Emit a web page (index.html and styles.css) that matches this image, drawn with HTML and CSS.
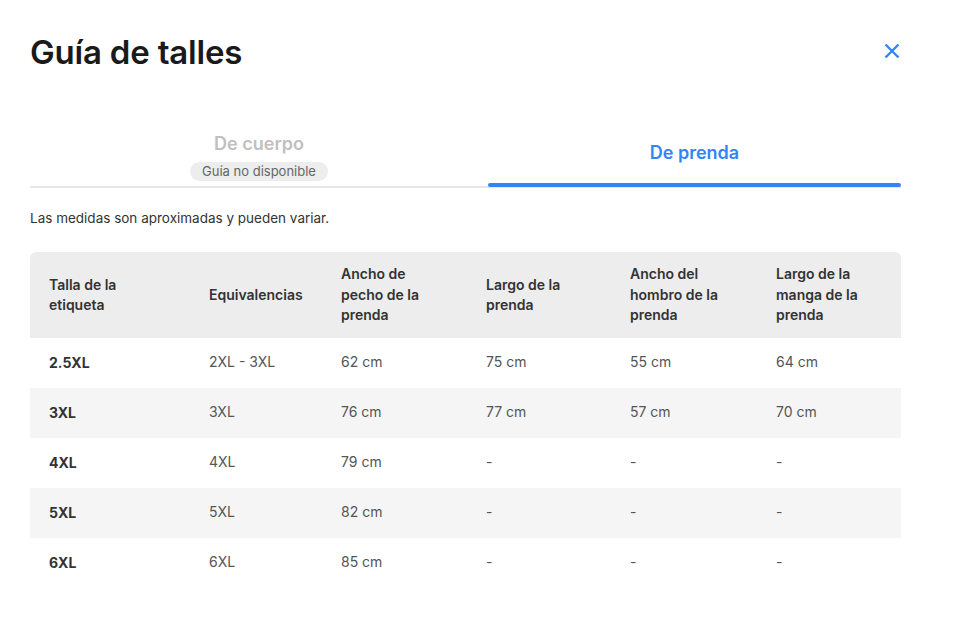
FILE: index.html
```html
<!DOCTYPE html>
<html lang="es">
<head>
<meta charset="utf-8">
<title>Guía de talles</title>
<link rel="stylesheet" href="styles.css">
</head>
<body>
<div class="modal">
  <header class="head">
    <h1 class="title">Guía de talles</h1>
    <button class="close" aria-label="Cerrar">
      <svg width="16" height="16" viewBox="0 0 16 16"><path d="M1.5 1.5 L14.5 14.5 M14.5 1.5 L1.5 14.5" stroke="#3483fa" stroke-width="2.4" stroke-linecap="butt" fill="none"/></svg>
    </button>
  </header>
  <nav class="tabs">
    <div class="tab disabled">
      <span class="tab-label">De cuerpo</span>
      <span class="badge">Guía no disponible</span>
    </div>
    <div class="tab active">
      <span class="tab-label">De prenda</span>
    </div>
  </nav>
  <p class="note">Las medidas son aproximadas y pueden variar.</p>
  <table class="sizes">
    <thead>
      <tr>
        <th class="c1">Talla de la<br>etiqueta</th>
        <th class="c2">Equivalencias</th>
        <th class="c3">Ancho de<br>pecho de la<br>prenda</th>
        <th class="c4">Largo de la<br>prenda</th>
        <th class="c5">Ancho del<br>hombro de la<br>prenda</th>
        <th class="c6">Largo de la<br>manga de la<br>prenda</th>
      </tr>
    </thead>
    <tbody>
      <tr><td class="size">2.5XL</td><td>2XL - 3XL</td><td>62 cm</td><td>75 cm</td><td>55 cm</td><td>64 cm</td></tr>
      <tr><td class="size">3XL</td><td>3XL</td><td>76 cm</td><td>77 cm</td><td>57 cm</td><td>70 cm</td></tr>
      <tr><td class="size">4XL</td><td>4XL</td><td>79 cm</td><td>-</td><td>-</td><td>-</td></tr>
      <tr><td class="size">5XL</td><td>5XL</td><td>82 cm</td><td>-</td><td>-</td><td>-</td></tr>
      <tr><td class="size">6XL</td><td>6XL</td><td>85 cm</td><td>-</td><td>-</td><td>-</td></tr>
    </tbody>
  </table>
</div>
</body>
</html>
```

FILE: styles.css
```css
* { box-sizing: border-box; }
html, body { margin: 0; padding: 0; background: #fff; }
body {
  font-family: "Inter", "Liberation Sans", sans-serif;
  color: #333;
}
.modal {
  width: 901px;
  padding: 30px 0 0 30px;
}
.head {
  display: flex;
  justify-content: space-between;
  align-items: center;
  height: 44px;
}
.title {
  margin: 0;
  font-size: 33px;
  font-weight: 600;
  color: #1a1a1a;
  letter-spacing: -0.2px;
}
.close {
  border: 0;
  background: none;
  padding: 0;
  width: 16px;
  height: 16px;
  margin-right: 1px;
  margin-top: -2px;
  display: flex;
}
.tabs {
  margin-top: 48px;
  display: flex;
  border-bottom: 2px solid #e6e6e6;
}
.tab {
  display: flex;
  flex-direction: column;
  align-items: center;
  height: 64px;
}
.tab.disabled { width: 458px; flex: none; padding-top: 10px; }
.tab.disabled .tab-label {
  color: #bfbfbf;
  font-size: 18px;
  font-weight: 600;
  line-height: 24px;
}
.badge {
  margin-top: 6px;
  background: #ededed;
  color: #666;
  font-size: 13px;
  line-height: 19px;
  padding: 0 12px;
  border-radius: 10px;
}
.tab.active {
  flex: 1;
  justify-content: center;
  padding-bottom: 2px;
  position: relative;
}
.tab.active::after {
  content: "";
  position: absolute;
  left: 0; right: 0; bottom: -1px;
  height: 4px;
  border-radius: 2px;
  background: #3483fa;
}
.tab.active .tab-label {
  color: #3483fa;
  font-size: 18px;
  font-weight: 600;
  line-height: 24px;
}
.note {
  margin: 22px 0 0;
  font-size: 13.5px;
  line-height: 16px;
  color: #333;
}
.sizes {
  margin-top: 26px;
  width: 871px;
  border-collapse: separate;
  border-spacing: 0;
  table-layout: fixed;
  font-size: 14px;
}
.sizes th {
  background: #ededed;
  text-align: left;
  font-weight: 600;
  color: #333;
  line-height: 20.5px;
  height: 86px;
  padding: 0 10px 0 19px;
  vertical-align: middle;
}
.sizes th:first-child { border-top-left-radius: 6px; }
.sizes th:last-child { border-top-right-radius: 6px; }
.c1 { width: 160px; }
.c2 { width: 132px; }
.c3 { width: 145px; }
.c4 { width: 144px; }
.c5 { width: 146px; }
.c6 { width: 144px; }
.sizes td {
  height: 50px;
  padding: 0 10px 3px 19px;
  color: #555;
  vertical-align: middle;
}
.sizes td.size { font-weight: 700; color: #333; padding-bottom: 1px; }
.sizes tbody tr:nth-child(even) td { background: #f5f5f5; }
```
